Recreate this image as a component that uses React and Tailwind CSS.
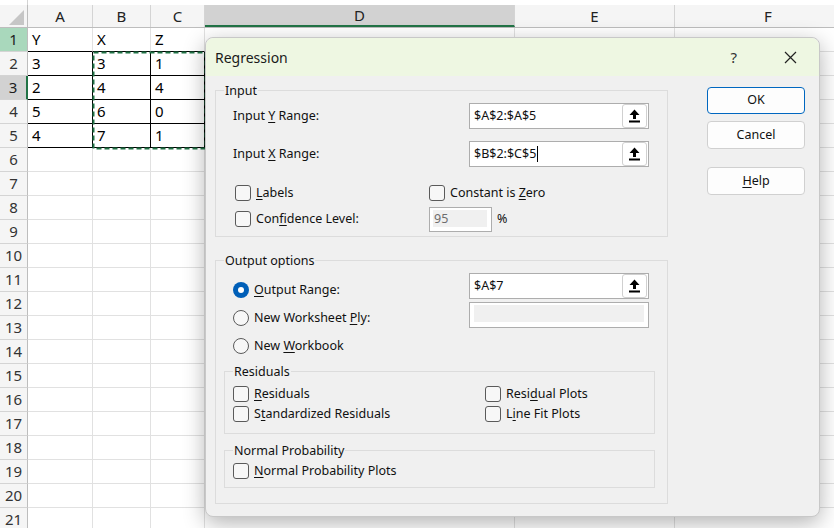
import React from "react";

const font = { fontFamily: '"Noto Sans", "Open Sans", sans-serif' };

const cols = [
  { id: "A", w: "w-[65px]" },
  { id: "B", w: "w-[58px]" },
  { id: "C", w: "w-[54px]" },
  { id: "D", w: "w-[310px]" },
  { id: "E", w: "w-[160px]" },
  { id: "F", w: "w-[187px]" },
];

const data = [
  ["Y", "X", "Z"],
  ["3", "3", "1"],
  ["2", "4", "4"],
  ["5", "6", "0"],
  ["4", "7", "1"],
];

function RowHeader({ n }) {
  let cls = "bg-[#f5f5f5] text-[#333] border-r border-r-[#bdbdbd]";
  if (n === 1) cls = "bg-[#a9d8bc] text-[#1d1d1d] border-r border-r-[#bdbdbd]";
  if (n === 3) cls = "bg-[#d2d2d2] text-[#1d1d1d] border-r-2 border-r-[#217346]";
  return (
    <div className={`w-[28px] shrink-0 h-full flex items-center justify-center border-b border-b-[#d4d4d4] text-[15px] ${cls}`}>
      {n}
    </div>
  );
}

function Sheet() {
  const rows = Array.from({ length: 21 }, (_, i) => i + 1);
  return (
    <div className="relative">
      <div className="h-[5px] bg-white flex">
        <div className="w-[28px] border-r border-r-[#d4d4d4]" />
      </div>
      {/* column headers */}
      <div className="flex h-[23px] border-b border-b-[#bdbdbd]">
        <div className="w-[28px] shrink-0 bg-[#f5f5f5] border-r border-r-[#bdbdbd] relative">
          <svg width="28" height="23" className="absolute left-0 top-0">
            <polygon points="9,20 24,5 24,20" fill="#c6c6c6" />
          </svg>
        </div>
        {cols.map((c) => (
          <div
            key={c.id}
            className={`${c.w} shrink-0 flex items-center justify-center text-[15px] text-[#222] border-r border-r-[#d4d4d4] ${
              c.id === "D" ? "bg-[#d2d2d2] border-b-2 border-b-[#217346]" : "bg-[#f5f5f5]"
            }`}
          >
            {c.id}
          </div>
        ))}
      </div>
      {rows.map((r) => (
        <div key={r} className="flex h-[24px]">
          <RowHeader n={r} />
          {cols.map((c, ci) => {
            const inData = ci < 3 && r <= 5;
            let border = "border-r border-r-[#e1e1e1] border-b border-b-[#e1e1e1]";
            if (inData && r === 1) border = "border-r border-r-[#e1e1e1] border-b border-b-black";
            if (inData && r > 1) border = "border-r border-r-black border-b border-b-black";
            return (
              <div key={c.id} className={`${c.w} shrink-0 h-full bg-white pl-[4px] flex items-center text-[15px] text-black ${border}`}>
                {inData ? data[r - 1][ci] : ""}
              </div>
            );
          })}
        </div>
      ))}
      {/* copy marquee around B2:C5 */}
      <svg className="absolute left-[92px] top-[51px]" width="115" height="99">
        <rect x="1.5" y="1.5" width="112" height="96" fill="none" stroke="#217346" strokeWidth="2" strokeDasharray="5 3" />
      </svg>
    </div>
  );
}

function Check({ children }) {
  return (
    <div className="flex items-center h-[20px]">
      <span className="w-[16px] h-[16px] rounded-[3px] border border-[#5a5a5a] bg-[#f7f7f7] shrink-0" />
      <span className="ml-[5px]">{children}</span>
    </div>
  );
}

function Radio({ checked, children }) {
  return (
    <div className="flex items-center h-[28px]">
      {checked ? (
        <span className="w-[16px] h-[16px] rounded-full bg-[#005fb8] flex items-center justify-center shrink-0">
          <span className="w-[6px] h-[6px] rounded-full bg-white" />
        </span>
      ) : (
        <span className="w-[16px] h-[16px] rounded-full border border-[#5a5a5a] bg-[#f7f7f7] shrink-0" />
      )}
      <span className="ml-[5px]">{children}</span>
    </div>
  );
}

function UpIcon() {
  return (
    <svg width="11" height="14" viewBox="0 0 11 14">
      <polygon points="5.5,0.5 10.5,6 7,6 7,10 4,10 4,6 0.5,6" fill="#000" />
      <rect x="0" y="11.5" width="11" height="2" fill="#000" />
    </svg>
  );
}

function RefEdit({ value, cursor }) {
  return (
    <div className="w-[180px] h-[26px] border border-[#adadad] bg-white flex items-center">
      <span className="flex-1 pl-[4px] flex items-center">
        {value}
        {cursor && <span className="w-[1px] h-[16px] bg-black ml-[1px]" />}
      </span>
      <span className="w-[25px] h-[24px] mr-[1px] rounded-[3px] border border-[#d0d0d0] bg-white flex items-center justify-center">
        <UpIcon />
      </span>
    </div>
  );
}

function Legend({ children }) {
  return <legend className="ml-[8px] px-[1px] leading-[17px]">{children}</legend>;
}

function Btn({ children, primary, cls }) {
  return (
    <div
      className={`w-[98px] flex items-center justify-center rounded-[4px] bg-[#fdfdfd] ${
        primary ? "border border-[#0067c0]" : "border border-[#d0d0d0]"
      } ${cls}`}
    >
      {children}
    </div>
  );
}

function Dialog() {
  return (
    <div
      className="absolute left-[205px] top-[37px] w-[615px] h-[480px] rounded-[8px] bg-[#f0f0f0] border border-[#c8c8c8] shadow-[0_6px_22px_rgba(0,0,0,0.3)] text-[12.5px] text-[#111]"
      style={font}
    >
      <div className="h-[38px] bg-[#eef7e2] rounded-t-[8px] flex items-center pl-[9px]">
        <span className="text-[14px] text-[#1a1a1a]">Regression</span>
        <span className="ml-auto text-[15px] text-[#333] mr-[47px]">?</span>
        <svg width="13" height="13" viewBox="0 0 13 13" className="mr-[22px]">
          <path d="M1 1 L12 12 M12 1 L1 12" stroke="#222" strokeWidth="1.2" />
        </svg>
      </div>
      <div className="flex">
        <div className="pl-[9px] w-[462px]">
          <fieldset className="mt-[6px] border border-[#dcdcdc] w-[453px]">
            <Legend>Input</Legend>
            <div className="pl-[17px] pt-[4px]">
              <div className="flex items-center">
                <span className="w-[236px]">
                  Input <u className="underline-offset-2">Y</u> Range:
                </span>
                <RefEdit value="$A$2:$A$5" />
              </div>
              <div className="flex items-center mt-[12px]">
                <span className="w-[236px]">
                  Input <u className="underline-offset-2">X</u> Range:
                </span>
                <RefEdit value="$B$2:$C$5" cursor />
              </div>
            </div>
            <div className="pl-[19px] mt-[16px] pb-[4px]">
              <div className="flex">
                <div className="w-[194px]">
                  <Check>
                    <u className="underline-offset-2">L</u>abels
                  </Check>
                </div>
                <Check>
                  Constant is <u className="underline-offset-2">Z</u>ero
                </Check>
              </div>
              <div className="flex items-center h-[26px] mt-[3px]">
                <div className="w-[194px]">
                  <Check>
                    Con<u className="underline-offset-2">f</u>idence Level:
                  </Check>
                </div>
                <div className="w-[63px] h-[25px] border border-[#adadad] bg-white pl-[3px] pt-[2px] pr-[4px]">
                  <div className="h-[17px] bg-[#f0f0f0] text-[#6d6d6d] leading-[17px] pl-[1px]">95</div>
                </div>
                <span className="ml-[5px]">%</span>
              </div>
            </div>
          </fieldset>

          <fieldset className="mt-[15px] border border-[#dcdcdc] w-[453px] pb-[15px]">
            <Legend>Output options</Legend>
            <div className="flex items-start">
              <div className="pl-[17px] w-[253px] mt-[7px]">
                <Radio checked>
                  <u className="underline-offset-2">O</u>utput Range:
                </Radio>
                <Radio>
                  New Worksheet <u className="underline-offset-2">P</u>ly:
                </Radio>
                <Radio>
                  New <u className="underline-offset-2">W</u>orkbook
                </Radio>
              </div>
              <div className="mt-[4px]">
                <RefEdit value="$A$7" />
                <div className="mt-[3px] w-[180px] h-[26px] border border-[#adadad] bg-white pl-[4px] pr-[4px] pt-[2px]">
                  <div className="h-[17px] bg-[#f0f0f0]" />
                </div>
              </div>
            </div>

            <fieldset className="mt-[3px] ml-[8px] w-[431px] border border-[#dcdcdc] pb-[9px]">
              <Legend>Residuals</Legend>
              <div className="flex pl-[8px] mt-[4px]">
                <div className="w-[252px]">
                  <Check>
                    <u className="underline-offset-2">R</u>esiduals
                  </Check>
                  <Check>
                    S<u className="underline-offset-2">t</u>andardized Residuals
                  </Check>
                </div>
                <div>
                  <Check>
                    Resi<u className="underline-offset-2">d</u>ual Plots
                  </Check>
                  <Check>
                    L<u className="underline-offset-2">i</u>ne Fit Plots
                  </Check>
                </div>
              </div>
            </fieldset>

            <fieldset className="mt-[8px] ml-[8px] w-[431px] border border-[#dcdcdc] pb-[6px]">
              <Legend>Normal Probability</Legend>
              <div className="pl-[8px] mt-[2px]">
                <Check>
                  <u className="underline-offset-2">N</u>ormal Probability Plots
                </Check>
              </div>
            </fieldset>
          </fieldset>
        </div>

        <div className="ml-[39px] pt-[11px] flex flex-col">
          <Btn primary cls="h-[27px]">OK</Btn>
          <Btn cls="h-[28px] mt-[7px]">Cancel</Btn>
          <Btn cls="h-[28px] mt-[18px]">
            <span>
              <u className="underline-offset-2">H</u>elp
            </span>
          </Btn>
        </div>
      </div>
    </div>
  );
}

export default function App() {
  return (
    <div className="relative w-[834px] h-[528px] overflow-hidden bg-white" style={font}>
      <Sheet />
      <Dialog />
    </div>
  );
}
